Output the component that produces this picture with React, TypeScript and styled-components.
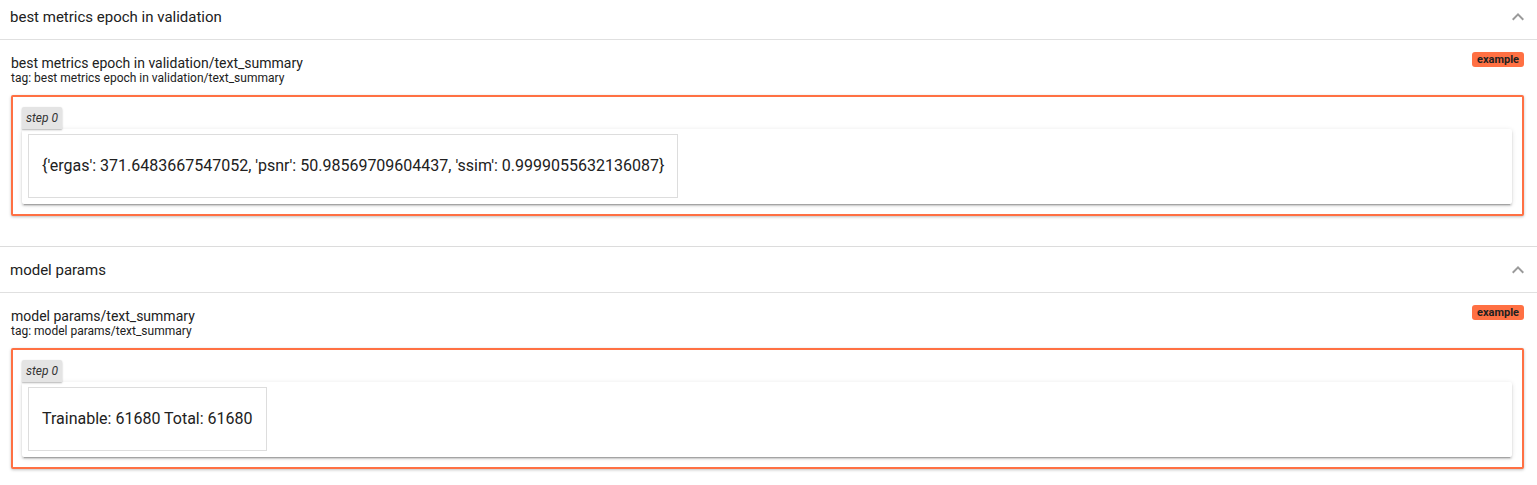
import React from "react";
import styled, { createGlobalStyle } from "styled-components";

const GlobalStyle = createGlobalStyle`
  html, body {
    margin: 0;
    padding: 0;
    background: #ffffff;
    font-family: Roboto, "Noto Sans", "Liberation Sans", sans-serif;
    color: #212121;
    overflow: hidden;
  }
  * { box-sizing: border-box; }
`;

const RUN_COLOR = "#ff7043";

const Page = styled.div`
  display: flex;
  flex-direction: column;
  margin-top: -6px;
  width: 100%;
`;

const Section = styled.section`
  display: flex;
  flex-direction: column;
  border-bottom: 1px solid #dcdcdc;
`;

const SectionHeader = styled.div`
  display: flex;
  align-items: center;
  justify-content: space-between;
  height: 46px;
  padding: 0 7px 0 10px;
  border-bottom: 1px solid #e0e0e0;
`;

const HeaderTitle = styled.span`
  font-size: 15px;
  line-height: 20px;
  color: #212121;
`;

const Chevron = styled.svg`
  width: 24px;
  height: 24px;
  fill: #9a9a9a;
  display: block;
`;

const SectionBody = styled.div`
  display: flex;
  flex-direction: column;
  padding: 12px 13px 30px 11px;
`;

const CardHeader = styled.div`
  display: flex;
  align-items: flex-start;
  justify-content: space-between;
  margin-bottom: 10px;
`;

const TitleBlock = styled.div`
  display: flex;
  flex-direction: column;
  padding-top: 3px;
`;

const CardTitle = styled.div`
  font-size: 14px;
  line-height: 16px;
  color: #212121;
`;

const CardTag = styled.div`
  font-size: 12px;
  line-height: 14px;
  color: #212121;
`;

const RunBadge = styled.span<{ $color: string }>`
  display: inline-block;
  background: ${(p) => p.$color};
  color: #212121;
  font-size: 11px;
  font-weight: 700;
  line-height: 15px;
  height: 15px;
  padding: 0 5px;
  border-radius: 3px;
`;

const RunFrame = styled.div<{ $color: string }>`
  display: flex;
  flex-direction: column;
  align-items: flex-start;
  border: 2px solid ${(p) => p.$color};
  border-radius: 2px;
  padding: 10px 10px 10px 9px;
  box-shadow: 0 1px 3px rgba(0, 0, 0, 0.25);
  background: #ffffff;
`;

const StepChip = styled.div`
  font-size: 12px;
  font-style: italic;
  line-height: 22px;
  height: 22px;
  padding: 0 4px;
  color: #333333;
  background: #e4e4e4;
  border-radius: 2px 2px 0 0;
  box-shadow: 0 1px 2px rgba(0, 0, 0, 0.3);
  position: relative;
  z-index: 1;
`;

const StepCard = styled.div`
  align-self: stretch;
  background: #ffffff;
  border-radius: 2px;
  padding: 5px 6px 6px 6px;
  box-shadow: 0 2px 2px 0 rgba(0, 0, 0, 0.14), 0 1px 5px 0 rgba(0, 0, 0, 0.12),
    0 3px 1px -2px rgba(0, 0, 0, 0.2);
`;

const ContentTable = styled.table`
  border-collapse: collapse;
`;

const ContentCell = styled.td`
  border: 1px solid #dddddd;
  padding: 21px 13px;
  font-size: 16px;
  line-height: 20px;
  color: #212121;
  white-space: nowrap;
`;

type Entry = { group: string; tag: string; text: string };

const entries: Entry[] = [
  {
    group: "best metrics epoch in validation",
    tag: "best metrics epoch in validation/text_summary",
    text: "{'ergas': 371.6483667547052, 'psnr': 50.98569709604437, 'ssim': 0.9999055632136087}",
  },
  {
    group: "model params",
    tag: "model params/text_summary",
    text: "Trainable: 61680 Total: 61680",
  },
];

export default function App() {
  return (
    <>
      <GlobalStyle />
      <Page>
        {entries.map((e) => (
          <Section key={e.group}>
            <SectionHeader>
              <HeaderTitle>{e.group}</HeaderTitle>
              <Chevron viewBox="0 0 24 24" aria-hidden="true">
                <path d="M12 8l-6 6 1.41 1.41L12 10.83l4.59 4.58L18 14z" />
              </Chevron>
            </SectionHeader>
            <SectionBody>
              <CardHeader>
                <TitleBlock>
                  <CardTitle>{e.tag}</CardTitle>
                  <CardTag>tag: {e.tag}</CardTag>
                </TitleBlock>
                <RunBadge $color={RUN_COLOR}>example</RunBadge>
              </CardHeader>
              <RunFrame $color={RUN_COLOR}>
                <StepChip>step 0</StepChip>
                <StepCard>
                  <ContentTable>
                    <tbody>
                      <tr>
                        <ContentCell>{e.text}</ContentCell>
                      </tr>
                    </tbody>
                  </ContentTable>
                </StepCard>
              </RunFrame>
            </SectionBody>
          </Section>
        ))}
      </Page>
    </>
  );
}
